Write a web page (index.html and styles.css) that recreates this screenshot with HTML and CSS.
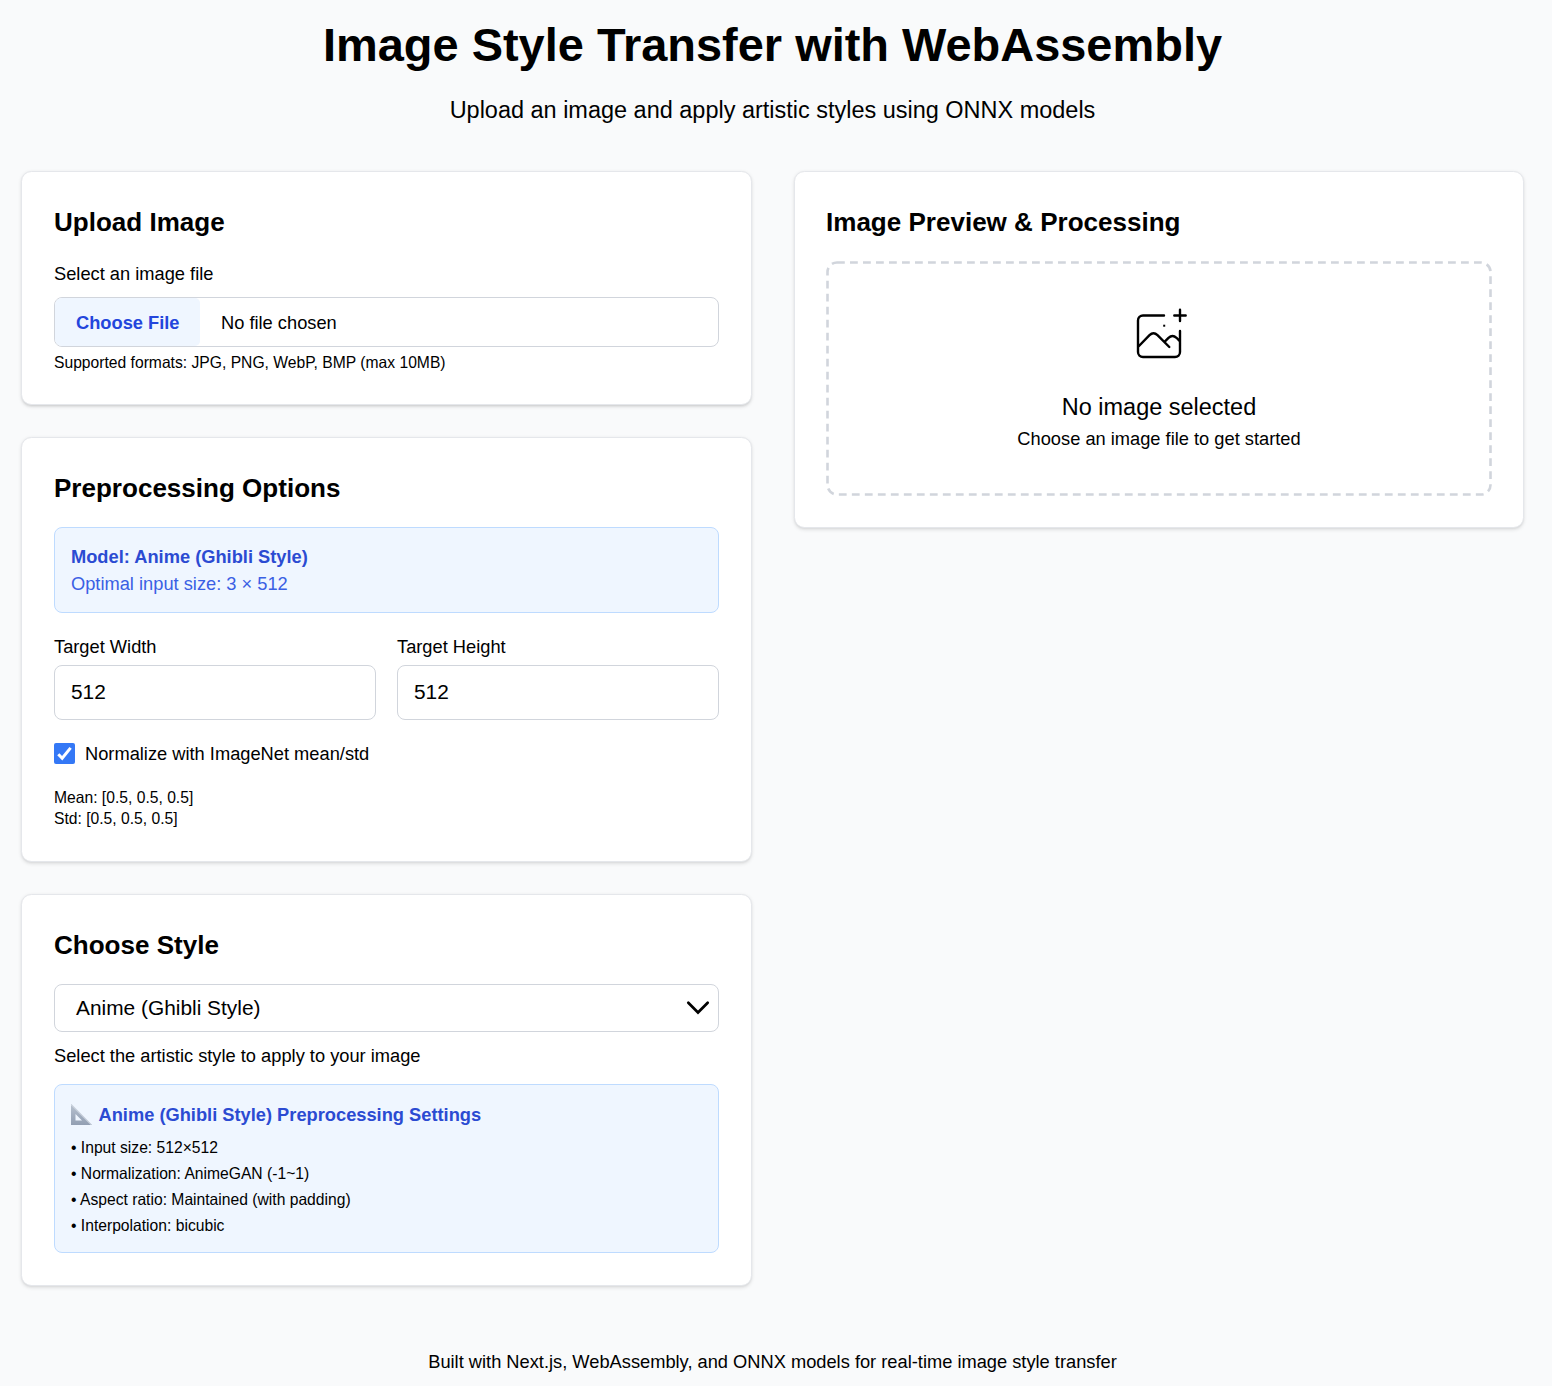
FILE: index.html
```html
<!DOCTYPE html>
<html lang="en">
<head>
<meta charset="utf-8">
<title>Image Style Transfer with WebAssembly</title>
<link rel="stylesheet" href="styles.css">
</head>
<body>
<div class="page">
  <header class="header">
    <h1>Image Style Transfer with WebAssembly</h1>
    <p>Upload an image and apply artistic styles using ONNX models</p>
  </header>
  <main class="columns">
    <div class="column">
      <section class="card upload">
        <h2>Upload Image</h2>
        <div class="label">Select an image file</div>
        <div class="file"><span class="file-button">Choose File</span><span class="file-name">No file chosen</span></div>
        <p class="hint">Supported formats: JPG, PNG, WebP, BMP (max 10MB)</p>
      </section>
      <section class="card options">
        <h2>Preprocessing Options</h2>
        <div class="info model">
          <h3>Model: Anime (Ghibli Style)</h3>
          <p>Optimal input size: 3 × 512</p>
        </div>
        <div class="fields">
          <div><div class="label">Target Width</div><div class="field">512</div></div>
          <div><div class="label">Target Height</div><div class="field">512</div></div>
        </div>
        <div class="check">
          <svg width="21" height="21" viewBox="0 0 21 21"><rect width="21" height="21" rx="2" fill="#3478f6"/><path d="M4.3 11.2 8.2 15.2 16.6 4.9" fill="none" stroke="#fff" stroke-width="3"/></svg>
          <span>Normalize with ImageNet mean/std</span>
        </div>
        <div class="stats"><p>Mean: [0.5, 0.5, 0.5]</p><p>Std: [0.5, 0.5, 0.5]</p></div>
      </section>
      <section class="card style">
        <h2>Choose Style</h2>
        <div class="select"><span>Anime (Ghibli Style)</span>
          <svg width="24" height="16" viewBox="0 0 24 16"><path d="M2.3 2.8 12 12.5 21.7 2.8" fill="none" stroke="#000" stroke-width="2.7" stroke-linecap="round"/></svg>
        </div>
        <p class="label select-note">Select the artistic style to apply to your image</p>
        <div class="info settings">
          <h3><svg width="21" height="21" viewBox="0 0 21 21"><defs><linearGradient id="ruler" x1="0" y1="0" x2="0" y2="1"><stop offset="0" stop-color="#b8c2d0"/><stop offset="1" stop-color="#929fb3"/></linearGradient></defs><path fill="url(#ruler)" fill-rule="evenodd" d="M0 0 21 21H0ZM4.5 10V16.5H11Z"/><path d="M.3.7 20.4 20.8" stroke="#cbd3de" stroke-width="1.2"/></svg><span>Anime (Ghibli Style) Preprocessing Settings</span></h3>
          <p>• Input size: 512×512</p>
          <p>• Normalization: AnimeGAN (-1~1)</p>
          <p>• Aspect ratio: Maintained (with padding)</p>
          <p>• Interpolation: bicubic</p>
        </div>
      </section>
    </div>
    <section class="card preview">
      <h2>Image Preview &amp; Processing</h2>
      <div class="drop">
        <svg class="dashes" width="666" height="235"><rect x="1.5" y="1.5" width="663" height="232" rx="9.5"/></svg>
        <svg class="picture" width="54" height="54" viewBox="1134 308 54 54"><path d="M1164 315.5H1143a5 5 0 0 0-5 5V352a5 5 0 0 0 5 5H1175a5 5 0 0 0 5-5V331M1180 309.8V321M1174.3 315.5H1185.7M1138 347 1149.5 335.2Q1153.5 331.2 1157.5 335.2L1169.3 347M1164.5 341.8 1168.5 337.8Q1172.5 334 1176.5 337.8L1180 341.5"/><rect x="1163.2" y="324.7" width="2" height="2"/></svg>
        <strong>No image selected</strong>
        <p>Choose an image file to get started</p>
      </div>
    </section>
  </main>
  <footer>Built with Next.js, WebAssembly, and ONNX models for real-time image style transfer</footer>
</div>
</body>
</html>
```
FILE: styles.css
```css
* { box-sizing: border-box; margin: 0; }
body { background: #f9fafb; color: #000; font: 18.27px/26px "Liberation Sans", Arial, sans-serif; }
svg { display: block; flex: none; }
.page { height: 1386px; padding: 20px 28px 0 21px; overflow: hidden; }
.header { height: 151px; text-align: center; }
h1 { font-size: 46.95px; line-height: 50px; }
.header p { margin-top: 22px; font-size: 23.48px; line-height: 36px; }
.columns { display: grid; grid-template-columns: 731px 730px; gap: 42px; align-items: start; }
.column { display: flex; flex-direction: column; gap: 32px; }
.card { padding: 32px; background: #fff; border: 1px solid #e5e7eb; border-radius: 10.4px; box-shadow: 0 1.3px 3.9px rgba(0,0,0,.1), 0 1.3px 2.6px -1.3px rgba(0,0,0,.1); }
.upload { height: 234px; }
.options { height: 425px; }
.style { height: 392px; }
.preview { height: 357px; padding: 32px 31px; }
h2 { margin-bottom: 21px; font-size: 26.04px; line-height: 36px; }
h3 { font-size: 18.27px; line-height: 26px; }
.file { display: flex; align-items: center; gap: 21px; height: 50px; margin-top: 10px; border: 1px solid #d1d5dc; border-radius: 8px; overflow: hidden; }
.file-button { width: 145px; padding: 2px 0 0 21px; border-radius: 5px; background: #eff6ff; color: #2346dc; font-weight: 700; line-height: 46px; }
.file-name { padding-top: 2px; }
.hint, .stats { font-size: 15.67px; line-height: 21px; }
.hint { margin-top: 5px; }
.info { padding: 16px; background: #eff6ff; border: 1px solid #bedbff; border-radius: 8px; }
.info h3 { color: #2b4bd2; }
.model { height: 86px; }
.model p { margin-top: 1px; color: #3a60e4; }
.fields { display: grid; grid-template-columns: 1fr 1fr; gap: 21px; margin-top: 21px; }
.field { height: 55px; margin-top: 5px; padding: 0 16px; border: 1px solid #d1d5dc; border-radius: 8px; font-size: 20.88px; line-height: 52px; }
.check { display: flex; align-items: center; gap: 10px; height: 26px; margin-top: 21px; }
.check svg { margin-top: -1px; }
.stats { margin-top: 20px; }
.select { display: flex; align-items: center; justify-content: space-between; height: 48px; padding: 0 8px 0 21px; border: 1px solid #d1d5dc; border-radius: 8px; font-size: 20.88px; }
.select-note { margin-top: 11px; }
.settings { height: 169px; margin-top: 15px; padding-top: 17px; }
.settings h3 { display: flex; align-items: center; gap: 6.5px; margin-bottom: 7px; }
.settings h3 svg { margin-top: -1px; }
.settings p { font-size: 15.67px; line-height: 26px; }
.drop { display: flex; flex-direction: column; align-items: center; height: 235px; padding-top: 47px; position: relative; }
.dashes { position: absolute; inset: 0; }
.dashes rect { fill: none; stroke: #d1d5dc; stroke-width: 2.6; stroke-dasharray: 7.8 5.2; }
.picture { margin-left: 4px; }
.picture path { fill: none; stroke: #000; stroke-width: 2.4; stroke-linecap: round; stroke-linejoin: round; }
.drop strong { margin-top: 27px; font-size: 23.48px; font-weight: 400; line-height: 36px; }
.drop p { margin-top: 1px; }
footer { margin-top: 63px; text-align: center; }
```
